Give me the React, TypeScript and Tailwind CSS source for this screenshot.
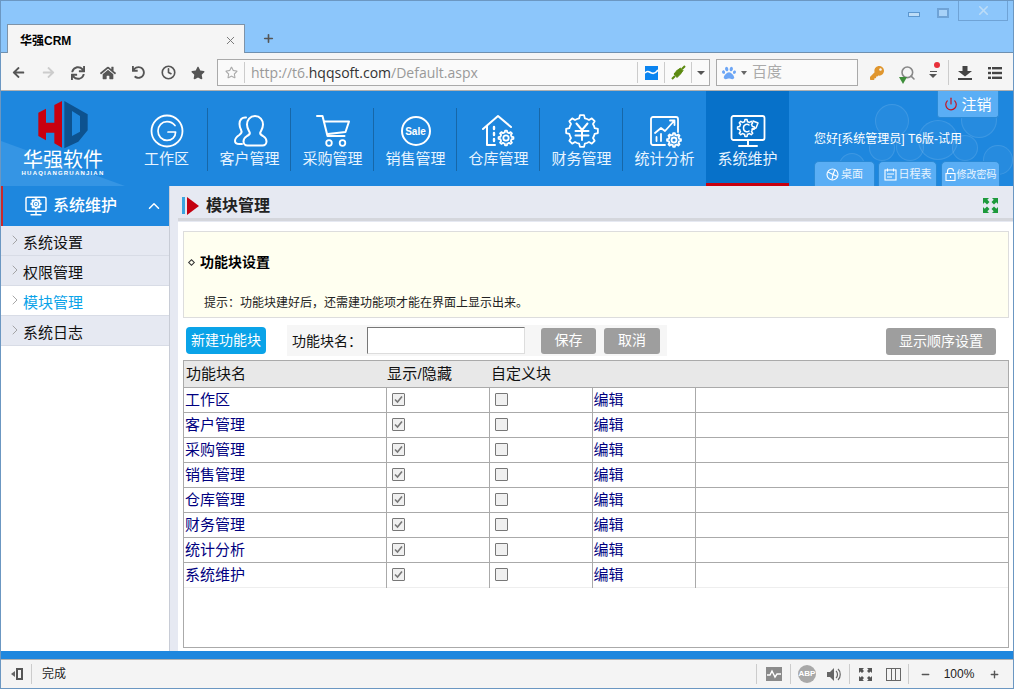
import React from "react";
import { FaArrowLeft, FaArrowRight, FaSync, FaHome, FaUndo, FaStar, FaRegStar, FaKey, FaPaw } from "react-icons/fa";
import { Clock, ChevronRight, ChevronUp, X, Plus, Minus, Power, Search } from "lucide-react";

function gearPath(cx: number, cy: number, ro: number, ri: number, n: number) {
  const pts: string[] = [];
  const step = (Math.PI * 2) / n;
  for (let i = 0; i < n; i++) {
    const a = i * step;
    const p = (r: number, t: number) => `${(cx + r * Math.cos(t)).toFixed(2)} ${(cy + r * Math.sin(t)).toFixed(2)}`;
    pts.push(p(ri, a - step * 0.5), p(ri, a - step * 0.28), p(ro, a - step * 0.16), p(ro, a + step * 0.16), p(ri, a + step * 0.28));
  }
  return "M" + pts.join("L") + "Z";
}

function Gear({ cx, cy, r }: { cx: number; cy: number; r: number }) {
  return (
    <g>
      <path d={gearPath(cx, cy, r, r * 0.76, 8)} />
      <circle cx={cx} cy={cy} r={r * 0.36} />
    </g>
  );
}

function NavSvg({ children, w = 36, h = 36 }: { children: React.ReactNode; w?: number; h?: number }) {
  return (
    <svg width={w} height={h} viewBox="0 0 36 36" fill="none" stroke="white" strokeWidth="1.8" strokeLinecap="round" strokeLinejoin="round">
      {children}
    </svg>
  );
}

const navIcons: React.ReactNode[] = [
  <NavSvg key="g">
    <circle cx="18" cy="18" r="15.5" />
    <path d="M26 12.5C24 9.8 21 8.6 18 8.6 12.8 8.6 9 12.8 9 18s3.8 9.4 9 9.4c5 0 8.6-3.4 8.6-8.4H19" strokeWidth="1.7" />
  </NavSvg>,
  <NavSvg key="u">
    <path d="M14 4.5c-4-.5-6.500 2.500-6.500 6.500 0 3 .8 4.500 1.800 6.500 1 1.800 0 3-2 4.500C5 23.500 3 25 3 28c0 2 2 3 4.500 3H10" strokeWidth="2" />
    <path d="M23 3c5 0 8 4 8 8.500 0 3.500-1.500 5.500-2.500 7.500-1 2 .500 3 2.500 4 2 1.200 3.500 2.500 3.500 5.500 0 2-1.500 4-4 4H15.500c-2.500 0-4-2-4-4 0-3 1.500-4.300 3.500-5.500 2-1 3.500-2 2.500-4-1-2-2.500-4-2.500-7.500C15 7 18 3 23 3Z" strokeWidth="2" />
  </NavSvg>,
  <NavSvg key="c">
    <path d="M2 3h5.500l5 20h17" strokeWidth="2" />
    <path d="M9 8.500h25l-3.500 10.500-17.500 2" strokeWidth="2" />
    <circle cx="14" cy="30" r="2.800" />
    <circle cx="27.500" cy="30" r="2.800" />
  </NavSvg>,
  null,
  <NavSvg key="h">
    <path d="M2 16 17 3l13 11" strokeWidth="2" />
    <path d="M6 13v19h8" strokeWidth="2" />
    <path d="M13 14v2M13 20v2M13 26v2" strokeWidth="2.400" />
    <Gear cx={25} cy={25} r={7.500} />
  </NavSvg>,
  <NavSvg key="y">
    <path d={gearPath(18, 18, 16, 13, 8)} strokeWidth="1.800" />
    <path d="M12.500 10.500 18 17l5.500-6.500M11.500 18h13M11.500 22.500h13M18 17v10" strokeWidth="2" />
  </NavSvg>,
  <NavSvg key="s">
    <path d="M18 32H6a2 2 0 0 1-2-2V6a2 2 0 0 1 2-2h23a2 2 0 0 1 2 2v13" />
    <path d="M8 20l6-5 4 3 9-10M23 7.500h4.500V12" />
    <path d="M9.500 24v4M14 21v7" />
    <Gear cx={27} cy={27} r={7} />
  </NavSvg>,
  <NavSvg key="m">
    <rect x="1.500" y="3" width="33" height="24" rx="2" />
    <path d="M18 27v5M9 33h18" strokeWidth="2" />
    <path d={gearPath(16, 15, 8.500, 6.500, 8)} strokeWidth="1.500" />
    <path d="M19 12c-1.500-1.500-5.500-1-5.500 3s4 4.500 5.500 3" strokeWidth="1.500" />
    <path d="M23 8l5 2-2 5-4 1" strokeWidth="1.500" />
  </NavSvg>,
];

const navLabels = ["工作区", "客户管理", "采购管理", "销售管理", "仓库管理", "财务管理", "统计分析", "系统维护"];
const rows = ["工作区", "客户管理", "采购管理", "销售管理", "仓库管理", "财务管理", "统计分析", "系统维护"];

function Tool({ children, w = "w-[30px]" }: { children: React.ReactNode; w?: string }) {
  return <div className={`${w} h-full flex items-center justify-center shrink-0`}>{children}</div>;
}

function Box({ checked }: { checked?: boolean }) {
  return (
    <span className="inline-flex w-[13px] h-[13px] -mt-[2px] border border-[#777] bg-[#f0f0f0] rounded-[1px] items-center justify-center align-middle">
      {checked && (
        <svg width="11" height="11" viewBox="0 0 11 11" fill="none" stroke="#777" strokeWidth="1.600">
          <path d="M2 5.500 4.500 8 9 2.500" />
        </svg>
      )}
    </span>
  );
}

function Sep({ h = "h-[24px]", c = "bg-[#ccc]" }: { h?: string; c?: string }) {
  return <div className={`w-px ${h} ${c} shrink-0`} />;
}

function Bubble({ cls }: { cls: string }) {
  return <div className={`absolute rounded-full border border-white/10 bg-white/[0.04] ${cls}`} />;
}

export default function App() {
  return (
    <div className="w-[1014px] h-[689px] flex flex-col border border-[#6b97c2] overflow-hidden bg-white font-['Liberation_Sans','Noto_Sans_CJK_SC',sans-serif] text-black">
      {/* title bar */}
      <div className="h-[52px] bg-[#8cc6fb] flex items-end border-b border-[#6e90b0] shrink-0">
        <div className="ml-[6px] w-[238px] h-[29px] -mb-px bg-[#f5f5f5] border border-b-0 border-[#7e93a8] flex items-center pt-[3px] pl-[12px] pr-[7px] justify-between">
          <span className="text-[12px] font-bold">华强CRM</span>
          <X size={13} color="#777" strokeWidth={1.800} />
        </div>
        <div className="w-[46px] h-[28px] flex items-center justify-center">
          <Plus size={13} color="#555" strokeWidth={3} />
        </div>
        <div className="flex-1" />
        <div className="self-start flex items-start">
          <div className="w-[12px] h-[5px] mt-[11px] border border-[#5c97cf] bg-[#bcdcf7]" />
          <div className="w-[12px] h-[10px] mt-[7px] ml-[17px] border-2 border-[#6fa3d6] bg-[#a8d2f8]" />
          <div className="w-[50px] h-[20px] ml-[9px] mr-[5px] border border-t-0 border-[#6fa3d6] flex items-center justify-center">
            <X size={15} color="#bcdcf7" strokeWidth={2.600} />
          </div>
        </div>
      </div>

      {/* toolbar */}
      <div className="h-[38px] bg-[#f5f5f5] flex items-center pl-[2px] pt-[2px] border-b border-[#b0b0b0] shrink-0">
        <Tool><FaArrowLeft size={13} color="#555" /></Tool>
        <Tool><FaArrowRight size={13} color="#ccc" /></Tool>
        <Tool><FaSync size={14} color="#555" /></Tool>
        <Tool><FaHome size={16} color="#555" /></Tool>
        <Tool><FaUndo size={13} color="#555" /></Tool>
        <Tool><Clock size={15} color="#555" strokeWidth={2.600} /></Tool>
        <Tool><FaStar size={14} color="#555" /></Tool>
        <div className="ml-[4px] w-[493px] h-[27px] border border-[#aaa] bg-[#fafafa] flex items-center shrink-0">
          <div className="w-[26px] flex justify-center"><FaRegStar size={13} color="#aaa" /></div>
          <Sep h="h-[21px]" />
          <div className="flex-1 pl-[6px] text-[14px] text-[#999] font-['Open_Sans',sans-serif]">
            http://t6.<span className="text-[#333]">hqqsoft.com</span>/Default.aspx
          </div>
          <Sep h="h-[21px]" />
          <div className="w-[26px] flex justify-center">
            <svg width="13" height="14" viewBox="0 0 13 14">
              <rect width="13" height="14" fill="#0a84f0" />
              <path d="M0 7c3-3 4-1 6.500 0S11 7 13 4" stroke="white" strokeWidth="1.600" fill="none" />
            </svg>
          </div>
          <Sep h="h-[21px]" />
          <div className="w-[26px] flex justify-center">
            <svg width="15" height="15" viewBox="0 0 15 15" stroke="#5c8a10" fill="#5c8a10">
              <path d="M1 14 4 11M14 1l-3 3" strokeWidth="2" />
              <path d="M3 9 6 5.500l3.500 3.500-3.500 3.500Z" />
              <path d="M6 5.500 9.500 3l2.500 2.500L9.500 9Z" />
            </svg>
          </div>
          <Sep h="h-[21px]" />
          <div className="w-[17px] flex justify-center">
            <div className="w-0 h-0 border-l-[4px] border-r-[4px] border-t-[4px] border-l-transparent border-r-transparent border-t-[#555]" />
          </div>
        </div>
        <div className="ml-[6px] w-[142px] h-[27px] border border-[#aaa] bg-[#fafafa] flex items-center shrink-0 pl-[5px]">
          <FaPaw size={14} color="#6da6f5" />
          <div className="ml-[5px] w-0 h-0 border-l-[3px] border-r-[3px] border-t-[4px] border-l-transparent border-r-transparent border-t-[#666]" />
          <span className="ml-[5px] text-[15px] text-[#aaa]">百度</span>
        </div>
        <div className="w-[4px]" />
        <Tool><FaKey size={14} color="#e0962e" /></Tool>
        <Tool>
          <div className="relative ml-[2px]">
            <Search size={16} color="#888" strokeWidth={2.400} />
            <div className="absolute -left-[1px] bottom-[-3px] w-0 h-0 border-l-[4px] border-r-[4px] border-t-[7px] border-l-transparent border-r-transparent border-t-[#3e8e3a]" />
          </div>
        </Tool>
        <Tool w="w-[22px]">
          <div className="relative flex flex-col items-center gap-[2px] mt-[4px]">
            <div className="absolute -top-[9px] left-[5px] w-[6px] h-[6px] rounded-full bg-[#e8303a]" />
            <div className="w-[7px] h-px bg-[#555]" />
            <div className="w-0 h-0 border-l-[4px] border-r-[4px] border-t-[4px] border-l-transparent border-r-transparent border-t-[#555]" />
          </div>
        </Tool>
        <div className="w-[4px]" />
        <Sep h="h-[25px]" />
        <div className="w-px" />
        <Tool>
          <svg width="14" height="14" viewBox="0 0 14 14" fill="#444">
            <path d="M4.500 0h5v5H14L7 10.500 0 5h4.500Z" />
            <rect y="12" width="14" height="2" />
          </svg>
        </Tool>
        <Tool>
          <svg width="14" height="12" viewBox="0 0 14 12" fill="#444">
            <rect width="3" height="2.400" /><rect x="4" width="10" height="2.400" />
            <rect y="4.800" width="3" height="2.400" /><rect x="4" y="4.800" width="10" height="2.400" />
            <rect y="9.600" width="3" height="2.400" /><rect x="4" y="9.600" width="10" height="2.400" />
          </svg>
        </Tool>
      </div>

      {/* header */}
      <div className="h-[95px] bg-[#1e87de] flex text-white shrink-0">
        <div className="relative w-[124px] shrink-0 flex flex-col items-center justify-end pb-[10px] overflow-hidden">
          <svg className="absolute left-0 top-0" width="124" height="95" viewBox="0 0 372 285">
            <path d="M0 150 372 285H0Z" fill="#3595e4" />
            <path d="M112 65 135 53V95H160V42L183 30V170L160 157V125H135V148L112 135Z" fill="#c9000f" />
            <path d="M190 30 260 70V118L232 152 190 172ZM213 60V135L237 122V75Z" fill="#0d528f" fillRule="evenodd" />
          </svg>
          <div className="relative text-[20px] leading-[16px] mb-[4px] text-white font-['Noto_Sans_CJK_SC',sans-serif] whitespace-nowrap">华强软件</div>
          <div className="relative text-[6px] leading-[5px] tracking-[1.200px] font-bold whitespace-nowrap">HUAQIANGRUANJIAN</div>
        </div>
        {navLabels.map((label, i) => (
          <div
            key={label}
            className={`relative w-[83px] shrink-0 flex flex-col items-center pt-[22px] ${i === 7 ? "bg-[#0771c9] border-b-[3px] border-[#c8000f]" : ""}`}
          >
            <div className="h-[36px] flex items-center justify-center">
              {i === 3 ? (
                <div className="w-[30px] h-[30px] rounded-full border-2 border-white flex items-center justify-center text-[10px] font-bold">Sale</div>
              ) : (
                navIcons[i]
              )}
            </div>
            <div className="text-[15px] leading-[20px] text-[#e8f4ff] whitespace-nowrap">{label}</div>
            {i < 6 && <div className="absolute right-0 top-[17px] w-px h-[63px] bg-[#1767a8]" />}
          </div>
        ))}
        <div className="relative flex-1 flex flex-col overflow-hidden">
          <Bubble cls="left-[86px] top-[13px] w-[34px] h-[34px]" />
          <Bubble cls="left-[172px] top-[11px] w-[36px] h-[36px]" />
          <Bubble cls="left-[129px] top-[29px] w-[40px] h-[40px]" />
          <Bubble cls="left-[50px] top-[62px] w-[26px] h-[26px]" />
          <Bubble cls="left-[80px] top-[44px] w-[26px] h-[26px]" />
          <Bubble cls="left-[163px] top-[44px] w-[26px] h-[26px]" />
          <Bubble cls="left-[194px] top-[54px] w-[30px] h-[30px]" />
          <Bubble cls="left-[107px] top-[42px] w-[28px] h-[28px]" />
          <div className="relative self-end mr-[14px] w-[62px] h-[27px] bg-[#5aaef5] border border-t-0 border-[#2a8ad6] rounded-b-[3px] flex items-center justify-center gap-[3px]">
            <Power size={14} color="#c8101c" strokeWidth={2} />
            <span className="text-[15px] leading-none">注销</span>
          </div>
          <div className="relative ml-[25px] mt-[13px] text-[12px] leading-[17px] whitespace-nowrap">您好[系统管理员] T6版-试用</div>
          <div className="relative mt-auto ml-[25px] flex">
            <div className="w-[61px] h-[25px] rounded-t-[5px] bg-[#5aaef5] border border-b-0 border-[#2a8ad6] flex items-center justify-center gap-[2px] text-[11px] text-[#e8f4ff]">
              <svg width="13" height="13" viewBox="0 0 13 13" fill="none" stroke="white" strokeWidth="1.100">
                <circle cx="6.500" cy="6.500" r="5.500" /><path d="M2 4l5 2.500-1 5M9 1.500 7 6.500l4.500 2" />
              </svg>
              桌面
            </div>
            <div className="ml-[3px] w-[59px] h-[25px] rounded-t-[5px] bg-[#5aaef5] border border-b-0 border-[#2a8ad6] flex items-center justify-center gap-[2px] text-[11px] text-[#e8f4ff]">
              <svg width="13" height="13" viewBox="0 0 13 13" fill="none" stroke="white" strokeWidth="1.100">
                <rect x="1" y="2" width="11" height="10" /><path d="M3.500.5v3M9.500.5v3M3 6h7M3 9h5" />
              </svg>
              日程表
            </div>
            <div className="ml-[4px] w-[59px] h-[25px] rounded-t-[5px] bg-[#5aaef5] border border-b-0 border-[#2a8ad6] flex items-center justify-center gap-[1px] text-[10px] text-[#e8f4ff] whitespace-nowrap">
              <svg width="11" height="13" viewBox="0 0 11 13" fill="none" stroke="white" strokeWidth="1.100">
                <rect x="1" y="5.500" width="9" height="7" /><path d="M2.500 5.500V3.500a3 3 0 0 1 6 0M5.500 8v2" />
              </svg>
              修改密码
            </div>
          </div>
        </div>
      </div>

      {/* main */}
      <div className="flex-1 flex min-h-0">
        <div className="w-[169px] shrink-0 bg-white border-r border-[#c8ccd6]">
          <div className="h-[40px] bg-[#1e87de] border-l-2 border-[#c8282c] flex items-center text-white">
            <svg className="ml-[22px]" width="22" height="20" viewBox="0 0 36 33" fill="none" stroke="white" strokeWidth="2.400">
              <rect x="1.500" y="2" width="33" height="23" rx="2" />
              <path d="M18 25v5M9 31h18" />
              <path d={gearPath(18, 13, 8, 6, 8)} />
              <circle cx="18" cy="13" r="2.500" />
            </svg>
            <span className="ml-[6px] text-[16px] font-medium leading-none">系统维护</span>
            <ChevronUp size={18} strokeWidth={2} className="ml-auto mr-[6px]" />
          </div>
          {["系统设置", "权限管理", "模块管理", "系统日志"].map((t) => {
            const active = t === "模块管理";
            return (
              <div key={t} className={`h-[30px] flex items-center border-b border-[#d8dce6] pl-[6px] ${active ? "bg-white text-[#0aa3e8]" : "bg-[#e6e9f2] text-[#111]"}`}>
                <ChevronRight size={16} color="#999" strokeWidth={1.300} className="-mt-[1px]" />
                <span className="pt-[4px] text-[15px] leading-none">{t}</span>
              </div>
            );
          })}
        </div>

        <div className="flex-1 flex flex-col min-w-0 bg-[#e6e9f2]">
          <div className="h-[36px] flex items-center shrink-0 pr-[15px] pt-[3px] relative">
            <div className="absolute left-[8px] right-0 bottom-[1px] h-[3px] bg-[#d4d6dc]" />
            <div className="ml-[12px] w-[3px] h-[17px] bg-[#3aa5e0]" />
            <svg className="ml-[2px]" width="12" height="18" viewBox="0 0 12 18"><path d="M0 0 12 9 0 18Z" fill="#c4000f" /></svg>
            <span className="ml-[7px] text-[16px] font-bold text-[#222] leading-none">模块管理</span>
            <svg className="ml-auto" width="15" height="15" viewBox="0 0 15 15" fill="#1d9a3c">
              <path d="M0 0h6L4.300 1.700 6.500 4 4 6.500 1.700 4.300 0 6ZM15 0v6l-1.700-1.700L11 6.500 8.500 4l2.200-2.300L9 0ZM0 15V9l1.700 1.700L4 8.500 6.500 11l-2.200 2.300L6 15ZM15 15H9l1.700-1.700L8.500 11 11 8.500l2.300 2.200L15 9Z" />
            </svg>
          </div>
          <div className="flex-1 ml-[8px] bg-white pt-[9px] pl-[5px] pr-[4px] pb-[3px] flex flex-col min-h-0">
            <div className="h-[87px] shrink-0 border border-[#ddd] bg-[#fffff0] pl-[5px] flex flex-col">
              <div className="mt-[20px] flex items-center h-[20px]">
                <div className="w-[5px] h-[5px] rotate-45 border border-[#333]" />
                <span className="ml-[6px] text-[14px] font-bold leading-none">功能块设置</span>
              </div>
              <div className="mt-[23px] ml-[15px] text-[12px] leading-[16px] text-[#222] whitespace-nowrap">提示：功能块建好后，还需建功能项才能在界面上显示出来。</div>
            </div>
            <div className="h-[42px] shrink-0 flex items-start pt-[7px] relative">
              <div className="ml-[3px] mt-[2px] w-[80px] h-[27px] rounded-[4px] bg-[#0aa3e8] text-white text-[14px] flex items-center justify-center">新建功能块</div>
              <div className="ml-[21px] w-[380px] h-[31px] bg-[#f6f6f6] flex items-center">
                <span className="ml-[5px] w-[75px] text-[14px] leading-none text-[#111] whitespace-nowrap">功能块名：</span>
                <div className="w-[158px] h-[27px] bg-white border border-[#ddd] border-t-[#777] border-l-[#777]" />
                <div className="ml-[16px] w-[55px] h-[26px] rounded-[3px] bg-[#9e9e9e] text-white text-[14px] flex items-center justify-center">保存</div>
                <div className="ml-[8px] w-[56px] h-[26px] rounded-[3px] bg-[#9e9e9e] text-white text-[14px] flex items-center justify-center">取消</div>
              </div>
              <div className="ml-auto mr-[13px] mt-[3px] w-[110px] h-[27px] rounded-[3px] bg-[#9e9e9e] text-white text-[14px] flex items-center justify-center">显示顺序设置</div>
            </div>
            <div className="flex-1 min-h-0 border border-[#aaa]">
              <table className="w-full table-fixed border-collapse text-[15px]">
                <colgroup>
                  <col className="w-[202px]" />
                  <col className="w-[103px]" />
                  <col className="w-[103px]" />
                  <col className="w-[103px]" />
                  <col />
                </colgroup>
                <thead>
                  <tr className="h-[26px] bg-[#e8e8e8] text-left text-[#111]">
                    <th className="font-normal p-0 pl-[2px]">功能块名</th>
                    <th className="font-normal p-0 pl-[1px] tracking-[0.2px]">显示/隐藏</th>
                    <th className="font-normal p-0 pl-[2px]">自定义块</th>
                    <th className="p-0" />
                    <th className="p-0" />
                  </tr>
                </thead>
                <tbody>
                  {rows.map((r) => (
                    <tr key={r} className="h-[25px]">
                      <td className="p-0 pl-[1px] pt-[1px] border-t border-[#aaa] text-[#000080] leading-[20px]">{r}</td>
                      <td className="p-0 pl-[5px] border-t border-l border-[#aaa] leading-[20px]"><Box checked /></td>
                      <td className="p-0 pl-[5px] border-t border-l border-[#aaa] leading-[20px]"><Box /></td>
                      <td className="p-0 pl-[1px] pt-[1px] border-t border-l border-[#aaa] text-[#000080] leading-[20px]">编辑</td>
                      <td className="p-0 border-t border-l border-[#aaa]" />
                    </tr>
                  ))}
                  <tr className="h-0">
                    <td colSpan={5} className="p-0 border-t border-[#eee]" />
                  </tr>
                </tbody>
              </table>
            </div>
          </div>
        </div>
      </div>

      <div className="h-[8px] bg-[#1e87de] shrink-0" />

      {/* status bar */}
      <div className="h-[29px] bg-[#f4f4f4] border-t border-[#b0b0b0] flex items-center shrink-0 text-[12px]">
        <div className="ml-[10px] flex items-center w-[12px]">
          <div className="w-0 h-0 border-t-[3px] border-b-[3px] border-r-[4px] border-t-transparent border-b-transparent border-r-[#666]" />
          <div className="ml-px w-[7px] h-[12px] border-2 border-[#555] shrink-0" />
        </div>
        <div className="ml-[8px]"><Sep h="h-[20px]" /></div>
        <span className="ml-[10px] text-[#222]">完成</span>
        <div className="flex-1" />
        <Sep h="h-[20px]" />
        <div className="w-[7px]" />
        <Tool w="w-[20px]">
          <svg width="16" height="14" viewBox="0 0 16 14">
            <rect width="16" height="14" fill="#8a8a8a" />
            <path d="M1 8h3l2-4 3 6 2-3h4" stroke="white" strokeWidth="1.400" fill="none" />
          </svg>
        </Tool>
        <div className="w-[6px]" />
        <Sep h="h-[20px]" />
        <div className="w-[5px]" />
        <Tool w="w-[22px]">
          <div className="w-[18px] h-[18px] rounded-full bg-[#a8a8a8] text-white text-[8px] font-bold flex items-center justify-center">ABP</div>
        </Tool>
        <div className="w-[6px]" />
        <Tool w="w-[21px]">
          <svg width="15" height="13" viewBox="0 0 15 13" fill="#666">
            <path d="M0 4h3l4-4v13L3 9H0Z" />
            <path d="M9 3c2 1.500 2 5.500 0 7M11 1c3 2.500 3 8.500 0 11" stroke="#666" strokeWidth="1.200" fill="none" />
          </svg>
        </Tool>
        <div className="w-[4px]" />
        <Sep h="h-[20px]" />
        <div className="w-[5px]" />
        <Tool w="w-[20px]">
          <svg width="13" height="13" viewBox="0 0 13 13" fill="#555">
            <path d="M0 0h5L3.500 1.500 5 3 3 5 1.500 3.500 0 5ZM13 0v5l-1.500-1.500L10 5 8 3l1.500-1.500L8 0ZM0 13V8l1.500 1.500L3 8l2 2-1.500 1.500L5 13ZM13 13H8l1.500-1.500L8 10l2-2 1.500 1.500L13 8Z" />
          </svg>
        </Tool>
        <div className="w-[8px]" />
        <Tool w="w-[20px]">
          <div className="w-[15px] h-[13px] border border-[#666] flex justify-center gap-[3px]">
            <div className="w-px h-full bg-[#666]" />
            <div className="w-px h-full bg-[#666]" />
          </div>
        </Tool>
        <div className="w-[5px]" />
        <Sep h="h-[20px]" />
        <div className="w-[2px]" />
        <Tool w="w-[28px]"><Minus size={11} color="#555" strokeWidth={3} /></Tool>
        <div className="w-[40px] text-center text-[12px] text-[#222]">100%</div>
        <Tool><Plus size={11} color="#555" strokeWidth={3} /></Tool>
        <div className="w-[4px]" />
      </div>
    </div>
  );
}
